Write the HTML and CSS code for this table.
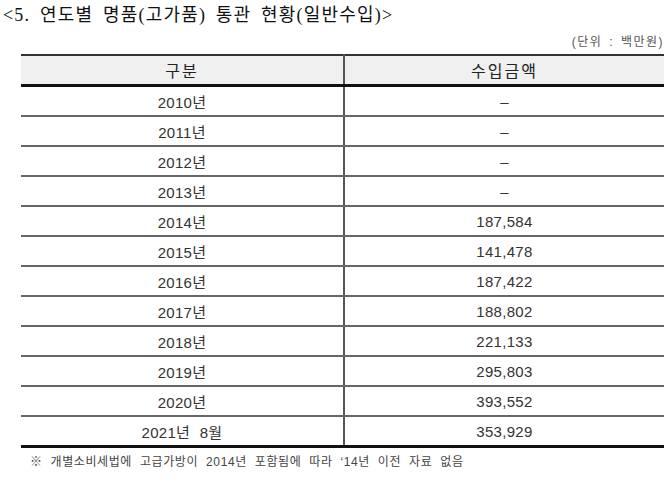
FILE: index.html
```html
<!DOCTYPE html>
<html lang="ko">
<head>
<meta charset="utf-8">
<link rel="stylesheet" href="styles.css">
</head>
<body>
<div class="page">
  <h1 class="title">&lt;5. 연도별 명품(고가품) 통관 현황(일반수입)&gt;</h1>
  <div class="unit">(단위 : 백만원)</div>
  <table class="data">
    <thead>
      <tr><th class="c1">구분</th><th>수입금액</th></tr>
    </thead>
    <tbody>
      <tr><td class="c1">2010년</td><td>–</td></tr>
      <tr><td class="c1">2011년</td><td>–</td></tr>
      <tr><td class="c1">2012년</td><td>–</td></tr>
      <tr><td class="c1">2013년</td><td>–</td></tr>
      <tr><td class="c1">2014년</td><td>187,584</td></tr>
      <tr><td class="c1">2015년</td><td>141,478</td></tr>
      <tr><td class="c1">2016년</td><td>187,422</td></tr>
      <tr><td class="c1">2017년</td><td>188,802</td></tr>
      <tr><td class="c1">2018년</td><td>221,133</td></tr>
      <tr><td class="c1">2019년</td><td>295,803</td></tr>
      <tr><td class="c1">2020년</td><td>393,552</td></tr>
      <tr class="last"><td class="c1">2021년 8월</td><td>353,929</td></tr>
    </tbody>
  </table>
  <p class="note">※ 개별소비세법에 고급가방이 2014년 포함됨에 따라 ‘14년 이전 자료 없음</p>
</div>
</body>
</html>
```
FILE: styles.css
```css
html, body { margin: 0; padding: 0; background: #fff; }
.page {
  width: 670px;
  height: 481px;
  overflow: hidden;
  font-family: "Liberation Sans", "Noto Sans CJK KR", sans-serif;
  color: #333;
}
.title {
  margin: 0;
  padding: 4px 0 0 3px;
  font-family: "Liberation Serif", "Noto Sans CJK KR", serif;
  font-weight: normal;
  font-size: 18px;
  line-height: 22px;
  color: #111;
  letter-spacing: 1.2px;
  word-spacing: 4px;
}
.unit {
  margin: 7px 6px 0 0;
  text-align: right;
  font-size: 12px;
  line-height: 18px;
  color: #555;
  letter-spacing: 1.5px;
  word-spacing: 2px;
}
.data {
  margin: 3px 0 0 21px;
  width: 643px;
  border-collapse: collapse;
  table-layout: fixed;
}
.data th, .data td {
  text-align: center;
  padding: 0;
  font-size: 15px;
  letter-spacing: 0.3px;
}
.data th {
  height: 28px;
  background: #f0f0f0;
  border-top: 2px solid #333;
  border-bottom: 3px solid #111;
  font-weight: normal;
  font-size: 16px;
  color: #222;
  letter-spacing: 2px;
}
.data .c1 { width: 322px; border-right: 2px solid #555; word-spacing: 5px; }
.data td {
  height: 28px;
  border-bottom: 2px solid #666;
  color: #333;
}
.data tr.last td { border-bottom: 3px solid #111; }
.note {
  margin: 6px 0 0 30px;
  font-size: 12px;
  line-height: 16px;
  color: #444;
  letter-spacing: 0.6px;
  word-spacing: 4px;
}
```
